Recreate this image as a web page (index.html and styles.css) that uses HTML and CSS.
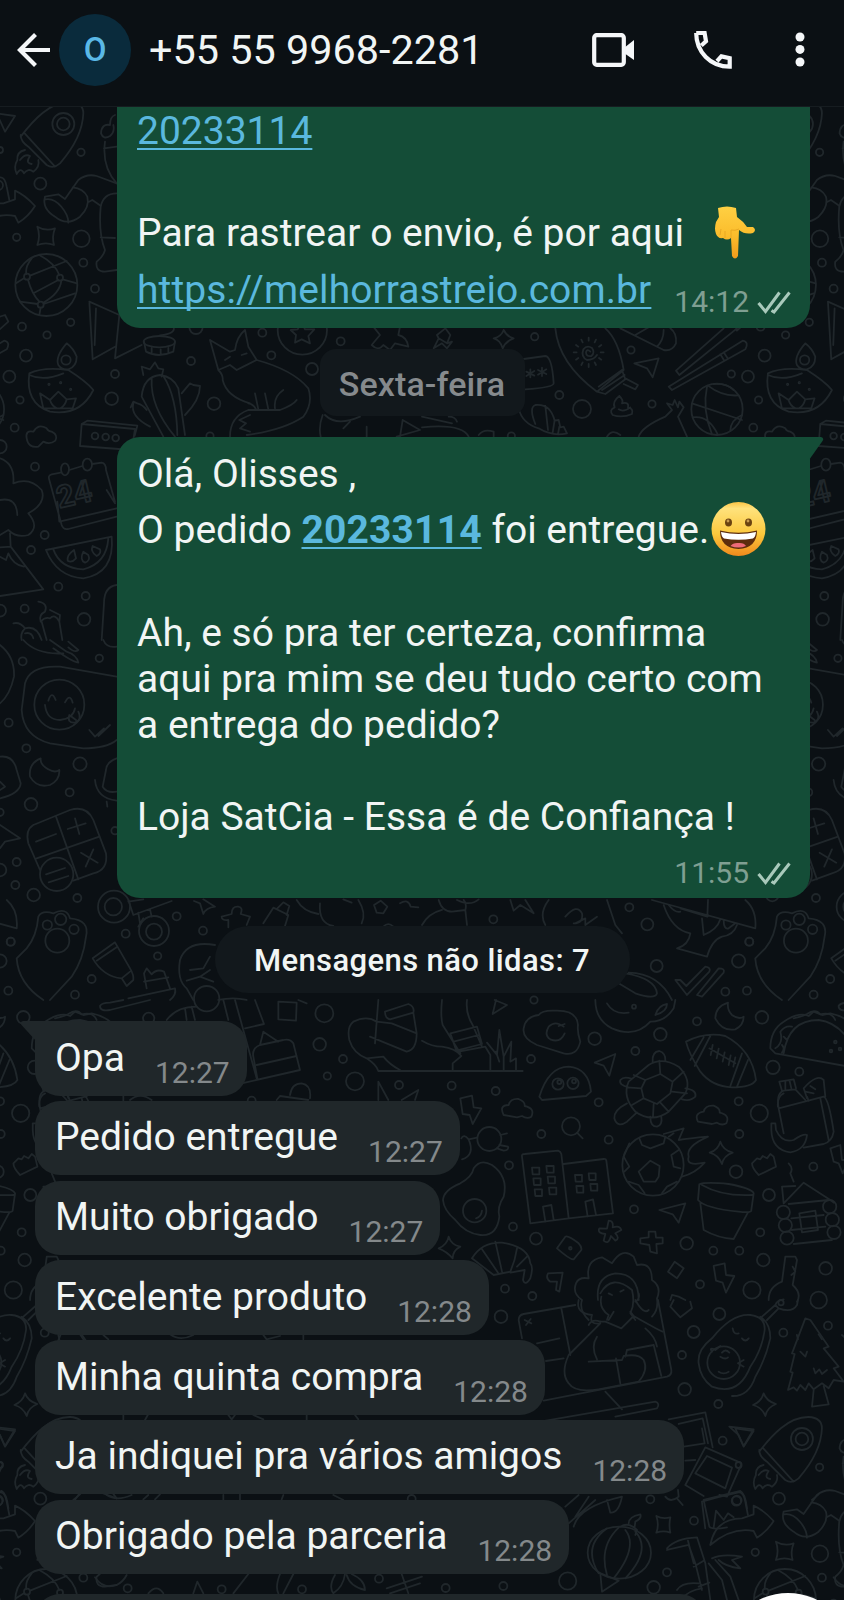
FILE: index.html
```html
<!DOCTYPE html>
<html lang="pt-BR">
<head>
  <meta charset="UTF-8">
  <meta name="viewport" content="width=device-width, initial-scale=1.0">
  <title>Chat</title>
  <link rel="stylesheet" href="styles.css">
</head>
<body>
  <div class="phone">
    <svg class="wallpaper" width="844" height="1600" viewBox="0 0 844 1600" aria-hidden="true">
      <defs>
        <g id="doodles">
          <!-- rocket, boot, globe -->
          <g transform="scale(.33333)">
            <path d="M62 410C100 360 150 305 210 306Q250 308 250 340C248 400 215 450 180 490Q160 508 140 495L85 440Q62 425 62 405M72 398L165 500M75 450Q50 455 52 480Q40 500 50 522Q62 500 72 520Q84 503 100 515Q120 500 115 480M60 480Q75 460 90 468Q75 490 95 492"/>
            <circle cx="190" cy="372" r="33"/><circle cx="190" cy="372" r="19"/>
            <path d="M-10 340L45 348L15 395L0 362Z"/>
            <path d="M-85 690Q-70 610 10 610L45 598L45 572Q75 585 105 618Q85 650 55 668L45 648Q-20 635 -85 690"/>
            <path d="M-100 640L-110 560Q-60 545 0 532Q15 530 20 560L28 600"/><circle cx="-5" cy="556" r="14"/>
            <path d="M135 590L175 583L195 597L235 540Q260 520 290 528L350 550M135 590Q125 625 165 650Q200 680 240 650Q270 620 262 590Q250 565 218 562M137 598C172 592 205 640 205 668M264 607L277 600L302 617"/>
            <path d="M350 580Q310 580 302 620Q295 700 315 750Q310 770 290 785Q285 815 315 815L350 810M302 712L345 714M345 345Q330 350 330 375Q305 370 303 400Q310 420 330 408Q345 395 340 375M315 425Q305 500 350 550M312 445L350 440"/>
            <path d="M112 680Q138 695 165 685Q155 710 162 735Q138 725 112 735Q122 708 112 680"/>
            <circle cx="139" cy="855" r="93"/><circle cx="81" cy="830" r="9"/><circle cx="180" cy="833" r="9"/><circle cx="122" cy="914" r="9"/>
            <path d="M90 827L200 783M84 839Q95 880 118 905M130 908Q180 880 184 842M95 775Q75 800 79 822M118 765Q165 790 178 825M48 850L73 834M60 905L113 912M131 912L225 880M188 838L231 850M122 923L118 945M100 880L175 840"/>
            <path d="M268 905L358 945L345 1075L425 1035M268 905L278 1078L345 1040M288 925L284 1035"/>
            <path d="M-15 955L15 945L25 965L-5 992Z"/>
            <circle cx="243" cy="457" r="11"/><circle cx="121" cy="551" r="18"/><circle cx="50" cy="712" r="11"/><circle cx="244" cy="716" r="25"/><circle cx="250" cy="788" r="12"/><circle cx="285" cy="866" r="12"/><circle cx="66" cy="980" r="12"/><circle cx="212" cy="967" r="11"/><circle cx="141" cy="1005" r="11"/><circle cx="0" cy="450" r="9"/>
          </g>

          <!-- lamp, cactus, fox, calendar, melon -->
          <g transform="translate(0 320) scale(.33333)">
            <path d="M88 160Q75 250 150 275Q240 290 280 210Q260 185 205 150Q130 140 88 160M88 165Q130 185 190 160M200 70Q165 110 175 135Q185 150 205 148Q230 140 230 110Q220 85 200 70M120 220L130 265L218 265L228 235L200 238L175 215L150 240ZM150 240Q155 258 170 264M200 238Q195 258 182 264"/>
            <circle cx="198" cy="120" r="14"/><circle cx="147" cy="193" r="2"/><circle cx="182" cy="188" r="2"/><circle cx="212" cy="208" r="2"/>
            <path d="M425 230Q430 170 480 165Q520 170 535 205L555 345M425 230L490 350M455 175Q450 260 525 350M490 168Q530 230 532 345M400 250Q390 290 450 320M392 262L400 245L412 250Q430 255 440 270M545 220L570 190L580 195L600 198Q600 240 555 285M430 165L425 140L450 148L465 127L475 145L490 148L485 170"/>
            <ellipse cx="478" cy="65" rx="47" ry="17"/><path d="M432 65L438 95Q475 115 520 95L525 65M480 46Q530 40 520 20M455 98V84M482 100V88M505 97V84"/>
            <path d="M630 60L655 150Q670 165 668 180Q680 230 750 250M630 60L690 95L705 90Q710 50 735 30L745 80L770 120M655 150L690 135L710 150L730 140L770 120M675 120L690 110M725 105L740 100M770 120Q880 150 925 205Q940 250 910 290Q850 330 740 345M745 270Q690 290 690 350M745 270L840 270Q880 255 890 240M750 285L718 300L738 310L720 325L750 335M765 220L775 268M795 220L805 268M850 210Q820 230 825 265M745 250Q760 252 768 268"/>
            <circle cx="907" cy="30" r="74"/><path d="M905 5L915 28L943 28L925 48L930 70L905 58L885 68L888 45L872 30L893 28Z"/>
            <path d="M1120 20L1140 45L1115 75Q1135 95 1150 75L1170 90L1185 70L1225 80Q1220 50 1195 45L1200 20"/>
            <path d="M80 355Q75 330 100 335Q115 310 140 325Q145 335 155 335Q175 345 166 362Q150 375 130 365L115 380Q85 385 80 355"/>
            <path d="M245 312L405 327L395 390L240 378ZM245 312L262 302L412 317L404 347"/>
            <circle cx="285" cy="348" r="10"/><circle cx="317" cy="351" r="10"/><circle cx="347" cy="354" r="10"/>
            <path d="M182 458L155 463Q143 466 148 480L185 615Q190 630 205 627L350 590M208 450L247 438M277 432L305 428Q318 430 318 450L345 545M178 605L350 565M172 545L178 605M320 510L345 550"/>
            <ellipse cx="195" cy="448" rx="12" ry="18"/><ellipse cx="262" cy="434" rx="14" ry="18"/>
            <text class="day" x="178" y="565" transform="rotate(-13 178 565)">24</text>
            <path d="M138 690L335 650Q345 760 250 775Q170 770 138 690M160 688Q180 745 250 748Q320 730 325 655"/>
            <path d="M222 690Q200 705 203 722Q215 730 228 715ZM250 695Q238 720 255 728Q272 722 265 705ZM278 678Q270 695 290 708Q305 700 300 688Z"/>
            <path d="M0 415Q45 430 40 490Q90 470 125 510Q140 550 85 580Q120 620 85 645Q50 655 25 630L0 645M0 540Q50 530 52 585M30 640L32 680L0 682M32 680L130 808L0 828M0 710L18 720L25 700Q40 735 72 740"/>
            <path d="M115 845Q145 850 135 875Q115 885 122 905Q135 890 150 895Q165 880 178 905L180 885L150 870M125 905L140 960M178 905L187 960M40 910Q60 905 75 925Q60 940 65 960M75 925Q110 915 125 960M75 940Q95 935 100 955"/>
            <path d="M350 795Q312 800 312 850L305 960M962 350Q955 320 968 285M975 285Q1010 320 1080 290M1030 325L1050 305M1100 320V350M1200 350L1208 300L1260 330L1190 350"/>
            <circle cx="78" cy="107" r="18"/><circle cx="28" cy="170" r="18"/><circle cx="345" cy="162" r="12"/><circle cx="335" cy="236" r="19"/><circle cx="60" cy="240" r="11"/><circle cx="44" cy="323" r="12"/><circle cx="0" cy="380" r="20"/><circle cx="105" cy="440" r="12"/><circle cx="134" cy="645" r="12"/><circle cx="93" cy="690" r="12"/><circle cx="175" cy="800" r="12"/><circle cx="257" cy="828" r="12"/><circle cx="74" cy="866" r="12"/><circle cx="0" cy="872" r="18"/><circle cx="252" cy="898" r="19"/><circle cx="573" cy="123" r="12"/><circle cx="787" cy="38" r="12"/><circle cx="814" cy="106" r="12"/><circle cx="936" cy="147" r="18"/><circle cx="642" cy="251" r="19"/><circle cx="1022" cy="64" r="12"/><circle cx="588" cy="22" r="20"/><circle cx="630" cy="348" r="11"/>
          </g>

          <!-- balloon, chopsticks, basketball -->
          <g transform="translate(422 320) scale(.33333)">
            <path d="M245 30Q255 50 275 55Q250 65 242 85Q235 60 215 55Q238 50 245 30M35 85L50 55L45 45L70 25L85 45L75 70L90 65L75 85L60 70ZM50 55L75 70"/>
            <path d="M400 25Q410 130 525 215L605 150Q590 60 550 25M525 215L550 222L610 178L600 150M530 200L600 150M540 210L608 165M610 175L648 195L640 208L605 192"/>
            <path d="M505 95Q495 85 492 97Q492 110 508 108Q520 98 510 84Q495 74 484 88Q476 110 495 120Q515 120 525 105M500 53V62M522 59L518 67M538 75L531 80M545 97H536M538 119L531 114M522 135L518 127M500 141V132M478 135L482 127M462 119L469 114M455 97H464M462 75L469 80M478 59L482 67"/>
            <path d="M592 228Q605 240 600 250Q622 245 618 262Q635 265 630 282Q600 295 572 285Q560 270 578 262Q570 245 592 228M590 268Q605 278 625 262"/>
            <path d="M637 130L710 115L692 172L675 145ZM905 25L762 152L772 165L945 25M740 200L962 62Q982 66 970 88L750 210ZM895 103L907 122M905 97L917 115"/>
            <path d="M595 25L725 90Q750 95 762 70Q765 40 745 25M640 45L680 22M705 80Q725 60 725 30"/>
            <circle cx="885" cy="268" r="77"/><path d="M858 197Q900 230 950 226M810 250L960 300M855 200Q840 270 870 343M812 292Q860 285 887 343M875 192Q915 190 935 210M925 333Q925 300 960 285"/>
            <path d="M650 350Q660 320 730 290L750 270L735 250L752 255L758 240L768 262L772 245L785 262L768 290L795 350"/>
            <path d="M305 117L370 108Q390 110 395 190Q395 203 310 208M325 148V172M313 155L337 167M337 153L313 168M360 143V168M348 150L373 162M373 148L348 164"/>
            <path d="M290 265Q300 310 350 325Q390 350 435 340L425 320L415 322L410 300L398 302Q385 250 340 255Q320 262 340 312M370 258L378 330M398 300L392 338M412 320L408 342M0 290L90 310M0 322Q120 310 140 350M80 290Q100 290 105 305M170 345Q185 325 215 335L215 350M555 350Q570 325 595 345"/>
            <circle cx="338" cy="50" r="11"/><circle cx="627" cy="90" r="11"/><circle cx="412" cy="225" r="12"/><circle cx="480" cy="267" r="27"/><circle cx="690" cy="252" r="11"/><circle cx="928" cy="162" r="11"/><circle cx="268" cy="348" r="11"/>
          </g>

          <!-- sticker, calculator, paw guitar -->
          <g transform="translate(0 640) scale(.33333)">
            <path d="M0 15Q45 50 42 110Q30 165 0 190M70 0Q110 45 190 40M150 0L200 35Q230 45 235 68Q215 65 160 25M205 5L235 30Q225 40 205 22M310 0Q320 25 350 20"/>
            <path d="M350 110L180 80Q90 75 75 130L65 210Q70 290 150 310L250 325Q320 325 350 300"/><circle cx="178" cy="194" r="75"/>
            <path d="M135 195Q140 240 180 240Q220 235 225 205M145 182Q155 150 167 180M195 187Q210 158 218 188M208 225Q200 250 225 248Q247 240 235 215M215 230L228 240M268 270L285 290L312 265M295 288L330 255"/>
            <path d="M0 350Q40 345 50 390L62 430Q60 460 0 475M0 425L15 440L0 450M122 355Q85 370 90 410Q110 445 150 435Q180 420 178 390Q165 400 145 388Q120 375 122 355"/>
            <path d="M350 355Q320 365 318 390L308 440Q320 460 350 455M285 420Q290 475 350 482M320 485L322 500"/>
            <path d="M100 555L210 510Q260 495 280 540L318 640Q325 690 280 700L220 722M100 555Q75 570 85 610L120 690M168 530L235 718M110 655L298 590M108 605L168 582M203 567L257 550M225 535L238 582M243 638L293 668M280 628L257 680M138 703L195 684M146 727L205 708"/><circle cx="170" cy="703" r="50"/>
            <path d="M0 555L60 595L15 605L0 625"/>
            <path d="M115 830Q125 810 160 820Q200 800 210 835Q270 840 258 890Q250 960 215 1010L150 1080M115 830Q110 890 80 925L50 955Q55 1030 130 1080"/>
            <circle cx="172" cy="902" r="36"/><circle cx="142" cy="855" r="14"/><circle cx="182" cy="838" r="17"/><circle cx="222" cy="868" r="14"/>
            <circle cx="342" cy="800" r="48"/><circle cx="340" cy="800" r="26"/><circle cx="462" cy="873" r="45"/><circle cx="462" cy="875" r="24"/>
            <path d="M385 780L400 825L515 783M430 835L415 860M415 818L420 850M450 808L455 830M385 785L430 778"/>
            <path d="M582 783L600 790L610 822Q618 803 645 800L610 778M665 830L695 822Q695 798 715 800Q730 802 722 822L750 830L740 855M665 830Q665 842 685 840L685 862M790 850L820 803L865 825L855 858M832 805L850 787L868 798L860 825"/>
            <path d="M890 780Q910 815 955 822M960 790Q955 850 1000 858M1075 780Q1100 820 1085 850M1030 778L1055 788M1122 795L1142 782L1162 800L1150 820L1130 818ZM1200 790Q1225 775 1232 800L1255 802M1150 860Q1165 845 1180 860"/>
            <path d="M278 955L345 907L390 985Q402 1005 400 1020L380 1038L365 1015Q310 1010 278 955M290 962L352 920M365 1015L390 995"/>
            <path d="M440 1045L432 1000L440 985L455 1003Q470 985 492 995L510 1045M432 1025L505 1012M385 1075L525 1045Q530 1065 510 1080"/>
            <path d="M645 915Q560 900 540 960Q530 1020 560 1045L580 1080M570 990L610 985L630 950M560 1022L600 1010L640 1025M600 1010L630 990M655 1080Q700 1070 740 1080"/>
            <circle cx="68" cy="64" r="12"/><circle cx="298" cy="55" r="11"/><circle cx="26" cy="248" r="12"/><circle cx="79" cy="325" r="12"/><circle cx="240" cy="372" r="20"/><circle cx="209" cy="457" r="12"/><circle cx="93" cy="493" r="19"/><circle cx="50" cy="666" r="12"/><circle cx="0" cy="517" r="11"/><circle cx="0" cy="690" r="19"/><circle cx="46" cy="735" r="12"/><circle cx="101" cy="765" r="19"/><circle cx="232" cy="774" r="12"/><circle cx="530" cy="829" r="12"/><circle cx="377" cy="881" r="12"/><circle cx="609" cy="872" r="12"/><circle cx="32" cy="905" r="12"/><circle cx="0" cy="963" r="20"/><circle cx="473" cy="948" r="11"/><circle cx="275" cy="1017" r="12"/><circle cx="25" cy="1052" r="12"/><circle cx="225" cy="1064" r="12"/><circle cx="345" cy="572" r="11"/>
          </g>

          <!-- umbrella, ticks -->
          <g transform="translate(422 640) scale(.33333)">
            <path d="M50 780Q60 815 90 815L130 810Q135 790 125 780M0 855Q20 820 60 810M105 780Q145 800 170 778M130 810L135 855M265 780L275 812L295 795L335 820L310 780M380 780Q350 820 370 855M430 830Q465 790 480 820Q485 850 455 850M460 850L490 835L490 855L525 830M555 780L580 855L600 880"/>
            <path d="M690 780L1000 865Q1005 810 970 780M725 795Q750 870 805 880Q800 915 765 925L855 950Q870 900 900 890Q935 885 945 855M858 780L856 830L775 805M740 795Q760 820 775 815M845 885Q885 870 895 838M840 835L845 885M905 840Q905 870 920 865L940 850"/>
            <path d="M760 1020L775 1020L793 1038L850 980Q868 983 862 995L795 1065ZM825 1065L890 985Q910 985 905 998L840 1070Z"/>
            <path d="M610 1000Q700 1015 705 1060Q700 1080 640 1060L590 1030M620 998Q710 1000 750 1080"/>
            <circle cx="214" cy="838" r="12"/><circle cx="622" cy="802" r="12"/><circle cx="676" cy="853" r="18"/><circle cx="982" cy="905" r="12"/><circle cx="704" cy="978" r="18"/><circle cx="910" cy="1055" r="12"/>
          </g>

          <!-- signpost, foot -->
          <g transform="translate(0 1000) scale(.33333)">
            <path d="M450 0L330 30Q300 35 300 18Q305 8 330 8L370 0M165 55Q190 50 205 42Q230 25 245 43Q280 35 290 60M500 60Q530 20 590 20M555 25L560 60M575 20L585 60"/><circle cx="620" cy="-4" r="38"/>
            <path d="M670 0L685 60M705 0L770 235M735 85L792 72L765 0M725 250L900 210L880 130Q870 115 850 120L780 135Q755 145 760 170L772 235M770 195L890 168M780 135L790 95L835 125M835 5L890 8L888 62L835 58ZM895 0L920 10"/>
            <path d="M1060 65Q1040 80 1048 120Q1060 160 1100 175Q1130 195 1135 213H1568M1060 65Q1100 45 1130 65L1175 70L1250 100Q1250 150 1220 155L1110 110M1135 0L1125 130M1155 35L1225 12Q1245 20 1240 38L1170 58Q1155 55 1155 35M1240 38L1250 100M1200 210Q1170 195 1150 170L1100 175"/>
            <path d="M1135 300V245L1165 300M1205 300L1255 270L1245 300M870 285Q875 250 905 250Q935 255 930 295M830 300L840 288L925 300M118 320Q115 290 135 280M205 290L210 302M370 285V302M390 300Q420 275 455 300"/>
            <circle cx="70" cy="52" r="19"/><circle cx="62" cy="340" r="26"/><circle cx="91" cy="585" r="18"/><circle cx="65" cy="697" r="12"/><circle cx="74" cy="780" r="19"/><circle cx="40" cy="870" r="26"/><circle cx="973" cy="40" r="27"/><circle cx="959" cy="133" r="19"/><circle cx="1029" cy="177" r="12"/><circle cx="982" cy="228" r="11"/><circle cx="1065" cy="244" r="27"/><circle cx="1197" cy="255" r="12"/><circle cx="446" cy="55" r="17"/><circle cx="755" cy="302" r="12"/>
          </g>

          <!-- turtle, football, buildings, soccer ball, pot -->
          <g transform="translate(422 1000) scale(.33333)">
            <path d="M60 0Q55 50 62 75L115 160M135 0Q130 40 152 75L180 140M85 100L165 80L180 132L103 152ZM95 125L170 105M0 122Q30 140 60 140Q100 145 118 168L92 190V213M110 155L190 140L205 165V213M195 128L225 165L232 90L245 170L268 125L265 185L282 175V213M245 170V213M232 185L222 155"/>
            <path d="M218 0L255 15L212 42L222 0M305 85Q310 50 350 45Q360 30 400 32Q465 30 468 75Q465 95 475 125Q465 170 425 160L345 135Q300 115 305 85M425 80Q400 60 380 80Q365 105 385 118Q415 130 428 100M410 78L428 72"/>
            <path d="M520 0Q520 60 570 85Q640 115 685 65Q730 65 755 25L760 0M555 10Q575 45 620 38M700 45Q710 15 735 12Q735 35 700 45"/><circle cx="636" cy="20" r="6"/>
            <path d="M518 188L580 162L562 227L545 197ZM352 290Q380 200 440 200Q500 205 507 275L492 288L360 300Z"/><circle cx="408" cy="252" r="17"/><circle cx="453" cy="250" r="17"/><circle cx="412" cy="246" r="6"/><circle cx="456" cy="244" r="6"/>
            <path d="M680 195Q720 170 770 200Q810 240 790 280L740 335Q690 370 640 335Q600 290 620 245ZM670 240L715 222L752 245L745 280L705 312L665 295L658 265ZM670 240L635 225M715 222L712 182M752 245L785 215M750 275L795 280M715 308L740 335M695 312L693 350M665 295L630 315M658 265L615 262M692 185Q690 155 712 153Q732 160 730 182M620 262Q590 255 595 240Q605 228 628 236M790 265Q825 270 820 290Q805 305 780 298M615 310Q575 330 577 355Q585 385 615 365L645 337M685 350Q685 380 705 380Q722 375 718 350"/>
            <path d="M792 125Q850 95 910 108Q990 150 1002 240Q990 262 930 262Q870 260 835 215Q800 160 792 125M845 112L805 180M865 108L818 198M960 160L925 258M978 180L945 260M862 145L940 190M872 135L866 165M890 146L884 175M908 157L902 185M926 166L920 195M940 172L934 200"/>
            <path d="M918 8Q880 20 880 55Q900 95 940 88Q965 75 965 50Q950 60 930 45Q915 30 918 8M1045 145Q1045 90 1085 65Q1130 35 1160 48L1175 35L1200 45L1225 40Q1320 60 1330 175L1270 198L1060 160ZM1085 160Q1100 60 1190 60Q1270 70 1310 180M1060 145Q1085 130 1075 95Q1090 75 1110 80M1085 110L1095 120M1080 158Q1090 145 1080 135"/><circle cx="1240" cy="126" r="4"/><circle cx="1227" cy="153" r="4"/><circle cx="1254" cy="147" r="4"/>
            <path d="M1070 325L1205 290Q1220 295 1235 395Q1230 425 1205 432L1145 443M1070 325L1085 400M1195 295L1220 420M1070 325Q1062 280 1085 272L1120 268L1150 300M1080 272L1072 245L1115 238L1122 265M1090 245V268M1103 243L1108 265M1155 295L1145 265Q1185 220 1205 240L1210 290M1150 275L1175 280M1165 258L1180 268M1048 370L1060 370L1062 390Q1080 430 1115 420Q1145 400 1155 405Q1150 450 1105 457Q1050 450 1048 390Z"/>
            <path d="M115 295L150 287L155 322L178 325L152 372L143 345L122 342ZM245 345Q230 315 260 315Q265 295 290 297Q310 305 308 318Q340 325 328 350Q315 358 300 348L285 352ZM828 365Q815 340 845 335Q850 315 875 317Q895 325 893 338Q925 345 913 370Q900 378 885 368L870 372Z"/>
            <circle cx="447" cy="379" r="27"/><path d="M465 398L482 415"/><circle cx="202" cy="417" r="36"/><path d="M165 413L140 418Q125 400 118 415M140 418Q160 465 120 478M235 405L255 400M232 435L258 440Q262 450 245 452L225 445"/>
            <path d="M63 600Q65 570 115 550Q150 530 155 505Q175 475 210 495Q260 530 245 590Q225 620 232 650Q225 710 175 705Q130 700 100 660Q65 630 63 600"/><circle cx="158" cy="632" r="35"/><path d="M180 632Q178 650 162 655"/>
            <path d="M325 670L300 470Q298 462 308 462L408 452Q416 455 418 462L440 655L573 640L553 482Q552 476 545 477L425 492M325 670L440 655M370 665L363 620L388 615L395 660M497 650L490 605L513 598L522 645"/>
            <path d="M330 503H352V523H332ZM373 498H395V518H375ZM334 535H356V555H336ZM377 530H399V550H379ZM338 568H360V588H340ZM381 563H403V583H383ZM459 525H480V545H461ZM500 520H521V540H502ZM463 558H484V578H465ZM505 552H526V572H507Z"/>
            <circle cx="693" cy="495" r="92"/><path d="M685 482L713 498L710 530L700 545H665L650 515ZM652 415L660 435L685 445L725 430L730 410M622 430L605 470L622 500L607 515M770 450L748 465L755 500L775 505M620 545L650 555L668 580M720 580L735 560L765 545M725 402L785 385L770 420Q800 415 858 410Q790 440 800 470Q790 500 848 488Q820 520 780 530M740 410L755 400"/>
            <path d="M895 425Q903 450 932 458Q905 467 900 492Q890 465 863 458Q888 450 895 425M990 490L1005 475L1015 478L1022 468L1035 475L1045 462L1055 470L1062 500L1010 525Q990 505 990 490M832 553L828 600Q850 625 950 635Q990 640 988 630L995 580Q990 565 920 552Q850 545 832 553M840 555Q900 590 992 585M835 610L845 690Q890 715 935 717L978 637M712 630L790 610L770 668L752 643Z"/>
            <path d="M1085 610L1145 548L1225 600L1235 608M1085 610L1080 560L1120 558M1100 612L1220 600M1108 655L1205 645M1108 690L1210 680M1115 732L1230 720M1132 640L1180 632L1188 690L1140 697ZM1100 490Q1115 505 1105 520L1115 545M1225 445L1255 435L1260 480L1280 480L1262 520L1250 490L1235 485Z"/><circle cx="1084" cy="637" r="20"/><circle cx="1090" cy="676" r="20"/><circle cx="1095" cy="714" r="20"/><circle cx="1223" cy="620" r="20"/><circle cx="1231" cy="659" r="20"/><circle cx="1236" cy="697" r="20"/>
            <path d="M560 662Q575 662 572 682Q595 675 598 690L580 700Q595 715 580 722L567 708Q560 735 545 722L550 702Q525 700 532 685L555 686ZM680 695L700 695L702 713L722 713V730L703 732L705 760L685 755L682 735L655 730V715L680 712ZM405 745L430 710Q438 705 470 730Q480 740 478 750L455 778Q445 780 405 745M738 815L758 785L785 805L765 835ZM875 798L908 790L912 825L937 828L912 878L902 848L882 842Z"/><circle cx="445" cy="745" r="4"/>
            <path d="M80 710Q88 735 115 740Q92 752 92 775Q75 755 50 745Q75 735 80 710M150 775Q180 725 240 728Q320 740 325 790Q335 800 325 835Q310 860 303 840L308 810L265 818M150 775L215 825L265 815M178 745L228 818M220 725L240 815M285 745Q280 780 265 815M315 770L285 800M378 820L422 818L412 875L402 870L405 845H385Q370 835 378 820"/>
            <path d="M1090 770L1120 770L1125 780L1112 855Q1140 880 1125 905M1090 770L1080 845Q1040 860 1040 900M1112 800L1120 815L1108 825"/>
            <path d="M500 960Q470 930 480 900Q450 880 462 850Q470 830 500 835Q490 780 540 772L570 790Q600 740 635 770L645 795Q690 785 690 840Q720 860 705 895Q710 930 690 950M528 900Q520 830 580 820Q650 820 650 900M535 880Q570 820 630 870Q640 910 625 940L640 960M538 890Q530 925 560 945L555 960M560 880L570 885M595 875L605 870M650 880Q655 895 640 905M745 900L750 885L770 890L790 900"/>
            <circle cx="336" cy="0" r="11"/><circle cx="518" cy="116" r="19"/><circle cx="715" cy="103" r="19"/><circle cx="825" cy="64" r="12"/><circle cx="327" cy="177" r="12"/><circle cx="640" cy="153" r="12"/><circle cx="89" cy="257" r="12"/><circle cx="221" cy="273" r="12"/><circle cx="530" cy="307" r="12"/><circle cx="358" cy="402" r="12"/><circle cx="560" cy="419" r="12"/><circle cx="950" cy="304" r="12"/><circle cx="1053" cy="202" r="20"/><circle cx="1132" cy="215" r="12"/><circle cx="942" cy="515" r="19"/><circle cx="952" cy="402" r="12"/><circle cx="261" cy="496" r="12"/><circle cx="273" cy="680" r="12"/><circle cx="636" cy="628" r="12"/><circle cx="342" cy="716" r="18"/><circle cx="794" cy="730" r="19"/><circle cx="874" cy="752" r="12"/><circle cx="952" cy="752" r="12"/><circle cx="1211" cy="805" r="19"/><circle cx="834" cy="853" r="12"/><circle cx="249" cy="866" r="12"/><circle cx="331" cy="888" r="12"/><circle cx="1174" cy="500" r="12"/>
          </g>

          <!-- laptop woman, avocado, tree, photos, pumpkin -->
          <g transform="translate(422 1300) scale(.33333)">
            <path d="M500 75Q510 55 535 65M300 115L290 60Q290 45 305 42L460 15M418 25L445 165M372 183L425 175M345 130L412 115M365 302L735 230Q750 225 748 210L708 0M355 365L700 305Q715 310 705 325L580 350M550 275L600 328M308 60L328 70M326 57L312 75"/>
            <path d="M470 0Q460 40 510 45Q500 75 535 70L440 165Q415 220 440 250Q460 280 530 268L650 245Q680 210 665 180Q650 160 605 168L600 180L500 185M535 65L550 65L598 85L635 48Q700 85 722 95M525 110Q505 140 525 178M582 175L595 250M615 150L695 135L718 228M615 150L610 170M670 85Q700 110 705 140M575 35L560 60M625 35L635 48M640 0Q665 45 680 30"/>
            <path d="M830 190Q825 150 870 115Q930 40 985 45Q1030 50 1028 90Q1020 150 985 200Q950 290 870 260Q835 235 830 190M1015 50Q1045 70 1045 115Q1030 180 1000 230Q980 290 930 288M1020 50L1060 15L1070 25L1035 60M1060 15Q1065 0 1085 -2M1070 25Q1110 40 1125 15L1128 0M932 85Q935 105 950 100M960 115Q970 128 980 115M870 155Q860 140 880 150L895 138M965 180L948 190L965 200M890 215Q905 225 920 215M900 158Q910 145 922 158M895 170Q910 180 918 172"/><circle cx="905" cy="188" r="49"/><circle cx="1077" cy="8" r="8"/>
            <path d="M1150 55L1110 160L1118 162L1105 215L1112 218L1098 270L1115 262L1125 272L1135 255L1150 270L1160 250L1175 268L1200 250L1220 265L1235 240L1265 245L1235 205L1250 200L1205 145L1220 140L1165 60ZM1135 155L1150 170L1155 155M1175 205L1180 220L1192 208L1200 222L1215 210M1175 270L1170 320L1220 313L1205 258"/>
            <path d="M1025 280Q1033 303 1062 312Q1035 322 1030 348Q1020 322 993 315Q1018 305 1025 280M755 0L745 20L775 52L810 25L805 5M922 380L995 388L965 438L950 405Z"/>
            <path d="M740 358L850 337L872 442M785 440L848 430L840 385M770 372L842 355L858 430M850 442L955 488Q960 492 955 500L915 590L892 585M850 442L790 555L845 588M855 468L930 503L910 565L820 520ZM790 482L820 480M845 600L955 573Q970 580 975 625M845 600L862 680Q870 690 915 682M875 683L882 632L905 660L918 640L935 652"/><circle cx="943" cy="603" r="14"/>
            <path d="M430 620L470 585M455 680Q470 620 600 590Q590 640 565 638L555 600M440 670L520 600M460 650L500 590M730 590Q745 610 770 590L768 570M765 595L782 615"/>
            <ellipse cx="592" cy="758" rx="95" ry="78"/><path d="M590 683Q530 740 555 825M610 690Q650 740 575 835M555 685Q480 740 530 820M640 695Q690 750 610 835M595 680Q620 665 645 690L640 705M620 670Q620 650 655 643Q660 655 640 665L638 680M535 820L590 842L540 875Z"/>
            <path d="M703 648Q722 658 745 652Q740 675 745 698Q725 690 703 698Q712 675 703 648M735 745Q760 715 825 712L850 790L865 900M735 750L800 735L820 790L840 870M798 722L815 790M815 800L845 782M830 860L862 848M860 790L900 840L915 900M880 780L925 830L950 900M870 775Q900 760 960 770L930 780L955 805Q910 800 890 780M765 870Q780 845 830 850M775 900Q800 870 840 865"/>
            <circle cx="237" cy="50" r="19"/><circle cx="892" cy="42" r="18"/><circle cx="815" cy="96" r="18"/><circle cx="1084" cy="98" r="12"/><circle cx="780" cy="165" r="12"/><circle cx="788" cy="268" r="19"/><circle cx="889" cy="312" r="12"/><circle cx="902" cy="422" r="12"/><circle cx="1218" cy="77" r="12"/><circle cx="1190" cy="0" r="25"/><circle cx="685" cy="598" r="12"/><circle cx="816" cy="662" r="12"/><circle cx="735" cy="817" r="12"/><circle cx="695" cy="862" r="19"/><circle cx="437" cy="843" r="26"/><circle cx="244" cy="858" r="12"/><circle cx="71" cy="864" r="12"/>
          </g>
          <g transform="translate(0 1300) scale(.33333)">
            <path d="M285 832Q310 870 350 855Q370 845 380 825M445 880Q470 850 490 880M580 880L592 845L610 880M745 822L700 880M840 822Q825 860 835 880M880 822L850 880M1005 825Q985 860 1000 880Q1030 860 1035 822M1055 822Q1095 840 1095 870Q1050 860 1040 825M1160 865L1266 830M1170 880L1260 850M1205 822L1225 880M370 345V360M445 342L435 360M685 345L695 358L705 345M760 345L790 358M920 342V360M1065 345L1075 358M240 583L220 600M320 585Q350 605 395 585M445 585L430 598M480 583L465 598M670 585V600M720 583V600M850 585L845 598M1000 585L1030 600M175 105L178 118M240 103L250 118M310 105L325 118M510 103Q540 125 580 105M790 105L800 118L840 108M910 103V118"/>
            <circle cx="383" cy="865" r="12"/><circle cx="665" cy="868" r="12"/><circle cx="906" cy="868" r="12"/><circle cx="1137" cy="836" r="12"/><circle cx="1235" cy="597" r="12"/>
          </g>
        </g>
      </defs>
      <use href="#doodles"/>
      <use href="#doodles" x="738.6"/>
      <use href="#doodles" x="-738.6"/>
      <use href="#doodles" y="1315"/>
      <use href="#doodles" x="738.6" y="1315"/>
    </svg>

    <header class="topbar">
      <svg class="back" width="34" height="34" viewBox="0 0 34 34"><path d="M33 17H3M18.500 1.500L3 17L18.500 32.500"/></svg>
      <div class="avatar">O</div>
      <h1 class="contact">+55 55 9968-2281</h1>
      <svg class="icon-video" width="43" height="34" viewBox="0 0 43 34"><rect x="2.200" y="2.200" width="29.600" height="29.600" rx="2.500"/><path class="fill" d="M32 15L42 7V27L32 20Z"/></svg>
      <svg class="icon-phone" width="38" height="38" viewBox="0 0 38 38"><path d="M2.200 2H10.600L12 10.300L7.300 14.500M2.200 2C2.200 21 16.500 35.500 35.700 35.700V27.200L27.400 25.400L23 30.200"/></svg>
      <svg class="icon-more" width="10" height="35" viewBox="0 0 10 35"><circle cx="5" cy="5" r="4.500"/><circle cx="5" cy="17.400" r="4.500"/><circle cx="5" cy="30" r="4.500"/></svg>
    </header>

    <main class="chat">
      <div class="bubble out first">
        <p><a href="#" class="link">20233114</a></p>
        <p class="blank"></p>
        <p class="tall">Para rastrear o envio, é por aqui<svg class="hand" width="42" height="56" viewBox="0 0 42 56">
          <defs><linearGradient id="skin" x1="0" y1="0" x2="0" y2="1"><stop offset="0" stop-color="#ffd043"/><stop offset=".55" stop-color="#fbbd2c"/><stop offset="1" stop-color="#f09c1b"/></linearGradient></defs>
          <path fill="url(#skin)" d="M4 3Q13 0 22 3L23 12Q29 16 33 22L39 22Q43 25 39 28Q31 30 25 25L24 51Q21 56 18 51L17 33Q13 36 9 33Q4 34 2 29Q0 24 2 17L5 12Z"/>
          <path fill="none" stroke="#e9a822" stroke-width="1" d="M6 30L7 24M11 33V26M17 33V25Q21 26 25 24"/>
        </svg></p>
        <p class="last-line"><a href="#" class="link url">https://melhorrastreio.com.br</a><span class="time">14:12<svg class="ticks" width="34" height="23" viewBox="0 0 34 23"><path d="M1.500 12L8.500 20.500L22.500 1.500M14.500 19.500L17 21L32.500 1.500"/></svg></span></p>
      </div>

      <div class="pill day-pill">Sexta-feira</div>

      <div class="bubble out second">
        <svg class="tail-out" width="15" height="24" viewBox="0 0 15 24"><path d="M0 0H12Q15.500 1 13.500 4L0 23Z"/></svg>
        <p>Olá, Olisses ,</p>
        <p class="tall order">O pedido <a href="#" class="link strong">20233114</a> foi entregue.<svg class="face" width="55" height="56" viewBox="0 0 55 56">
          <defs><linearGradient id="face" x1="0" y1="0" x2="0" y2="1"><stop offset="0" stop-color="#fbc344"/><stop offset=".12" stop-color="#ffe27c"/><stop offset=".6" stop-color="#fcc83c"/><stop offset="1" stop-color="#f0891c"/></linearGradient></defs>
          <circle cx="27.500" cy="28" r="27" fill="url(#face)"/>
          <ellipse cx="17.500" cy="21.500" rx="3.500" ry="4" fill="#6b4310"/><ellipse cx="37.500" cy="21.500" rx="3.500" ry="4" fill="#6b4310"/>
          <circle cx="17" cy="20" r="1.400" fill="#c69a50"/><circle cx="37" cy="20" r="1.400" fill="#c69a50"/>
          <path fill="#5d2d0d" d="M9 29.500Q27.500 34 46 29.500Q46 47 27.500 48Q9 47 9 29.500Z"/>
          <path fill="#fff" d="M10 31Q27.500 35 45 31Q44.500 36 42 37.500Q27.500 40 13 37.500Q10.500 36 10 31Z"/>
          <path fill="#ee6a78" d="M19.500 45Q22 41.500 27.500 42Q33 41.500 35 45Q27.500 48 19.500 45Z"/>
        </svg></p>
        <p class="blank"></p>
        <p>Ah, e só pra ter certeza, confirma</p>
        <p>aqui pra mim se deu tudo certo com</p>
        <p>a entrega do pedido?</p>
        <p class="blank"></p>
        <p>Loja SatCia - Essa é de Confiança !</p>
        <span class="time">11:55<svg class="ticks" width="34" height="23" viewBox="0 0 34 23"><path d="M1.500 12L8.500 20.500L22.500 1.500M14.500 19.500L17 21L32.500 1.500"/></svg></span>
      </div>

      <div class="pill unread">Mensagens não lidas: 7</div>

      <div class="incoming">
        <div class="bubble in">
          <svg class="tail-in" width="17" height="24" viewBox="0 0 17 24"><path d="M17 0H3Q-.5 1 1.500 4L17 21Z"/></svg>
          <p>Opa</p><span class="time">12:27</span>
        </div>
        <div class="bubble in"><p>Pedido entregue</p><span class="time">12:27</span></div>
        <div class="bubble in"><p>Muito obrigado</p><span class="time">12:27</span></div>
        <div class="bubble in"><p>Excelente produto</p><span class="time">12:28</span></div>
        <div class="bubble in"><p>Minha quinta compra</p><span class="time">12:28</span></div>
        <div class="bubble in"><p>Ja indiquei pra vários amigos</p><span class="time">12:28</span></div>
        <div class="bubble in"><p>Obrigado pela parceria</p><span class="time">12:28</span></div>
        <div class="bubble in cut"></div>
      </div>
    </main>

    <div class="fab"></div>
  </div>
</body>
</html>
```
FILE: styles.css
```css
* {
  box-sizing: border-box;
}
body {
  margin: 0;
  background-color: #0b1014;
  font-family: Roboto, "Liberation Sans", sans-serif;
  color: #f1f5f4;
}
.phone {
  position: relative;
  width: 844px;
  height: 1600px;
  overflow: hidden;
}
.wallpaper {
  position: absolute;
  top: 0;
  left: 0;
  fill: none;
  stroke: #20272b;
  stroke-width: 5.4;
  stroke-linecap: round;
  stroke-linejoin: round;
}
.day {
  font-size: 92px;
  font-weight: bold;
}

/* header */
.topbar {
  position: relative;
  display: flex;
  align-items: center;
  height: 107px;
  padding: 0 39px 7px 17px;
  background-color: #0b1014;
  border-bottom: 1px solid #161c20;
}
.topbar svg {
  flex: none;
  fill: none;
  stroke: #f5f7f9;
  stroke-width: 4.2;
}
.topbar .icon-more,
.topbar .fill {
  fill: #f5f7f9;
  stroke: none;
}
.avatar {
  display: flex;
  justify-content: center;
  align-items: center;
  width: 72px;
  height: 72px;
  margin-left: 8px;
  border-radius: 50%;
  background-color: #0a2b3c;
  color: #5ab8e6;
  font-size: 33px;
  font-weight: 500;
}
.contact {
  margin: 0 auto 0 18px;
  font-size: 41.400px;
  font-weight: 400;
  white-space: nowrap;
}
.icon-video {
  margin-right: 59px;
}
.icon-phone {
  margin-right: 63px;
}

/* messages */
.chat {
  position: relative;
  display: flex;
  flex-direction: column;
}
.bubble {
  position: relative;
  font-size: 39px;
  line-height: 46px;
}
.bubble p {
  margin: 0;
  height: 46px;
  white-space: nowrap;
}
.bubble .tall {
  height: 67px;
  line-height: 67px;
}
.out {
  width: 693px;
  margin-left: 117px;
  padding: 14px 19px 0 20px;
  border-radius: 23px;
  background-color: #144d37;
}
.first {
  height: 221px;
  padding-top: 1px;
  border-radius: 0 0 23px 23px;
}
.second {
  height: 461px;
  border-top-right-radius: 0;
}
.link {
  color: #5ab8de;
  text-decoration: underline;
  text-decoration-thickness: 2px;
  text-underline-offset: 4px;
  text-decoration-skip-ink: none;
}
.url {
  letter-spacing: .08px;
}
.strong {
  font-weight: 700;
  letter-spacing: .15px;
}
.hand {
  margin-left: 30px;
  vertical-align: -15px;
}
.face {
  margin-left: 2px;
  vertical-align: -14px;
}
.bubble .last-line {
  display: flex;
  justify-content: space-between;
}
.time {
  display: flex;
  align-items: center;
  font-size: 30px;
  line-height: 36px;
  color: #84898b;
}
.out .time {
  color: #7f9f92;
}
.last-line .time {
  margin-top: 17px;
  height: 36px;
}
.second .time {
  justify-content: flex-end;
  margin-top: 15px;
}
.ticks {
  margin-left: 8px;
  fill: none;
  stroke: #a9c9bb;
  stroke-width: 3;
}
.tail-out {
  position: absolute;
  top: 0;
  left: 692px;
  fill: #144d37;
}
.tail-in {
  position: absolute;
  top: 0;
  left: -15px;
  fill: #20272a;
}

/* date and unread labels */
.pill {
  align-self: center;
  display: flex;
  justify-content: center;
  align-items: center;
  height: 67px;
  padding-top: 2px;
  background-color: #12181c;
  font-weight: 500;
  white-space: nowrap;
}
.day-pill {
  width: 205px;
  margin: 21px 0;
  border-radius: 16px;
  color: #868a8d;
  font-size: 34px;
  letter-spacing: .1px;
}
.unread {
  width: 415px;
  margin: 28px 0;
  border-radius: 34px;
  font-size: 31px;
  letter-spacing: .4px;
}

.incoming {
  display: flex;
  flex-direction: column;
  align-items: flex-start;
  gap: 5.300px;
  padding-left: 35px;
}
.in {
  display: flex;
  gap: 30px;
  height: 74.500px;
  padding: 13.500px 17px 0 20px;
  border-radius: 25px;
  background-color: #20272a;
}
.in:first-child {
  border-top-left-radius: 0;
}
.in .time {
  margin-top: 20px;
  height: 36px;
}
.cut {
  width: 670px;
  margin-top: 14px;
}
.fab {
  position: absolute;
  top: 1593px;
  left: 724px;
  width: 128px;
  height: 128px;
  border-radius: 50%;
  background-color: #fff;
}
```
